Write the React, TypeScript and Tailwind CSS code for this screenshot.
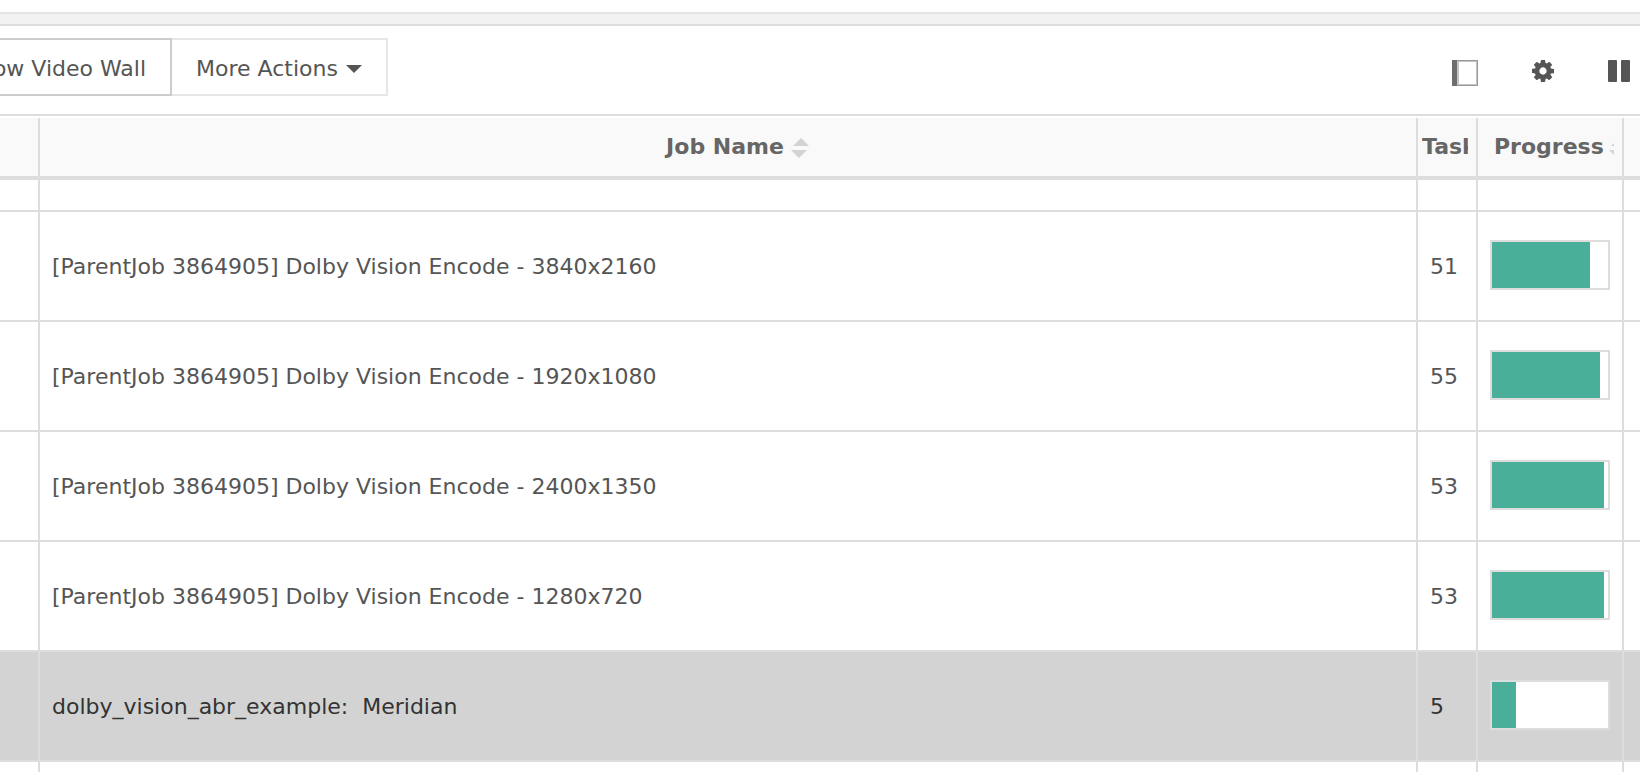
import type { ReactNode } from "react";

type Job = {
  name: string;
  tasks: number;
  progress: number;
  selected?: boolean;
};

const jobs: Job[] = [
  { name: "[ParentJob 3864905] Dolby Vision Encode - 3840x2160", tasks: 51, progress: 84.5 },
  { name: "[ParentJob 3864905] Dolby Vision Encode - 1920x1080", tasks: 55, progress: 93 },
  { name: "[ParentJob 3864905] Dolby Vision Encode - 2400x1350", tasks: 53, progress: 96.5 },
  { name: "[ParentJob 3864905] Dolby Vision Encode - 1280x720", tasks: 53, progress: 96.5 },
  { name: "dolby_vision_abr_example:  Meridian", tasks: 5, progress: 21, selected: true },
];

function SortIcon() {
  return (
    <svg className="h-6 w-5 shrink-0" viewBox="0 0 20 24" fill="#d3d3d3" aria-hidden="true">
      <path d="M11 3l8 8H3z" />
      <path d="M9 23l-8-8h16z" />
    </svg>
  );
}

function PanelIcon() {
  return (
    <svg className="h-[26px] w-[26px]" viewBox="0 0 26 26" aria-hidden="true">
      <path d="M0 0h26v26H0z" fill="#999" />
      <path d="M5 1h20v24H5z" fill="#c4c4c4" />
      <path d="M7 2h17v22H7z" fill="#fff" />
      <path d="M0 0h5v26H0z" fill="#6e6e6e" />
    </svg>
  );
}

function GearIcon() {
  return (
    <svg className="h-[22px] w-[22px]" viewBox="0 0 1536 1536" fill="#555" aria-hidden="true">
      <path d="M1024 768q0-106-75-181t-181-75-181 75-75 181 75 181 181 75 181-75 75-181zm512-109v222q0 12-8 23t-20 13l-185 28q-19 54-39 91 35 50 107 138 10 12 10 25t-9 23q-27 37-99 108t-94 71q-12 0-26-9l-138-108q-44 23-91 38-16 136-29 186-7 28-36 28H657q-14 0-24.500-8.500T621 1506l-28-184q-49-16-90-37l-141 107q-10 9-25 9-14 0-25-11-126-114-165-168-7-10-7-23 0-12 8-23 15-21 51-66.500t54-70.500q-27-50-41-99L29 913q-13-2-21-12.500T0 877V655q0-12 8-23t19-13l186-28q14-46 39-92-40-57-107-138-10-12-10-24 0-10 9-23 26-36 98.500-107.500T337 135q13 0 26 10l138 107q44-23 91-38 16-136 29-186 7-28 36-28h222q14 0 24.500 8.500T915 30l28 184q49 16 90 37l142-107q9-9 24-9 13 0 25 10 129 119 165 170 7 8 7 22 0 12-8 23-15 21-51 66.500t-54 70.500q26 50 41 98l183 28q13 2 21 12.500t8 23.500z" />
    </svg>
  );
}

function PauseIcon() {
  return (
    <svg className="h-[22px] w-[22px]" viewBox="0 0 22 22" fill="#555" aria-hidden="true">
      <rect width="9" height="22" rx="1" />
      <rect x="13" width="9" height="22" rx="1" />
    </svg>
  );
}

function IconButton({ label, children }: { label: string; children: ReactNode }) {
  return (
    <button type="button" aria-label={label} className="flex items-center justify-center">
      {children}
    </button>
  );
}

function ProgressBar({ value }: { value: number }) {
  return (
    <div
      role="progressbar"
      aria-label="Progress"
      aria-valuenow={value}
      aria-valuemin={0}
      aria-valuemax={100}
      className="h-[50px] border-2 border-[#dddddd] bg-white"
    >
      <div className="h-full bg-[#4aaf98]" style={{ width: `${value}%` }} />
    </div>
  );
}

function Toolbar() {
  return (
    <div className="flex h-[90px] items-start justify-between border-b-2 border-[#dddddd] pt-3 pr-[10px]">
      <div className="flex">
        <button
          type="button"
          className="-ml-[61px] h-[58px] border-2 border-[#cccccc] px-6 pt-1 whitespace-nowrap"
        >
          Show Video Wall
        </button>
        <button
          type="button"
          className="flex h-[58px] items-center gap-2 border-2 border-l-0 border-[#e7e7e7] px-6 pt-1 whitespace-nowrap"
        >
          More Actions
          <svg className="h-2 w-4" viewBox="0 0 16 8" fill="#555" aria-hidden="true">
            <path d="M0 0h16L8 8z" />
          </svg>
        </button>
      </div>
      <div className="flex items-start gap-[54px] pt-[22px]">
        <IconButton label="Toggle panel">
          <PanelIcon />
        </IconButton>
        <IconButton label="Settings">
          <GearIcon />
        </IconButton>
        <IconButton label="Pause">
          <PauseIcon />
        </IconButton>
      </div>
    </div>
  );
}

const headCell = "h-[62px] border-r-2 border-b-4 border-[#dddddd] bg-[#f9f9f9] p-0 font-bold text-[#666666]";
const cell = "border-r-2 border-b-2 border-[#dddddd] p-0";

function JobTable() {
  return (
    <table className="mt-0.5 w-full table-fixed border-separate border-spacing-0 text-left">
      <colgroup>
        <col className="w-10" />
        <col />
        <col className="w-[60px]" />
        <col className="w-[146px]" />
        <col className="w-4" />
      </colgroup>
      <thead>
        <tr>
          <th className={headCell} />
          <th className={headCell}>
            <div className="flex items-center justify-center gap-1.5 pl-5">
              Job Name
              <SortIcon />
            </div>
          </th>
          <th className={headCell}>
            <div className="mr-2 ml-1 overflow-hidden whitespace-nowrap">Tasks</div>
          </th>
          <th className={headCell}>
            <div className="mr-2 ml-4 flex items-center gap-1 overflow-hidden">
              Progress
              <SortIcon />
            </div>
          </th>
          <th className="border-b-4 border-[#dddddd] bg-[#f9f9f9] p-0" />
        </tr>
      </thead>
      <tbody>
        <tr className="h-8">
          <td className={cell} />
          <td className={cell} />
          <td className={cell} />
          <td className={cell} />
          <td className="border-b-2 border-[#dddddd] p-0" />
        </tr>
        {jobs.map((job) => (
          <tr
            key={job.name}
            className={job.selected ? "h-[110px] bg-[#d3d3d3] text-[#333333]" : "h-[110px]"}
          >
            <td className={cell} />
            <td className={cell}>
              <div className="px-3 pt-0.5 whitespace-pre">{job.name}</div>
            </td>
            <td className={cell}>
              <div className="px-3 pt-0.5">{job.tasks}</div>
            </td>
            <td className={cell}>
              <div className="px-3 pb-0.5">
                <ProgressBar value={job.progress} />
              </div>
            </td>
            <td className="border-b-2 border-[#dddddd] p-0" />
          </tr>
        ))}
        <tr className="h-[10px]">
          <td className="border-r-2 border-[#dddddd] p-0" />
          <td className="border-r-2 border-[#dddddd] p-0" />
          <td className="border-r-2 border-[#dddddd] p-0" />
          <td className="border-r-2 border-[#dddddd] p-0" />
          <td className="p-0" />
        </tr>
      </tbody>
    </table>
  );
}

export default function App() {
  return (
    <div className="overflow-hidden bg-white font-[Verdana,'DejaVu_Sans',sans-serif] text-[22px] leading-7 text-[#555555]">
      <div className="mt-3 h-[14px] border-y-2 border-t-[#e5e5e5] border-b-[#dddddd] bg-[#f2f2f2]" />
      <Toolbar />
      <JobTable />
    </div>
  );
}
